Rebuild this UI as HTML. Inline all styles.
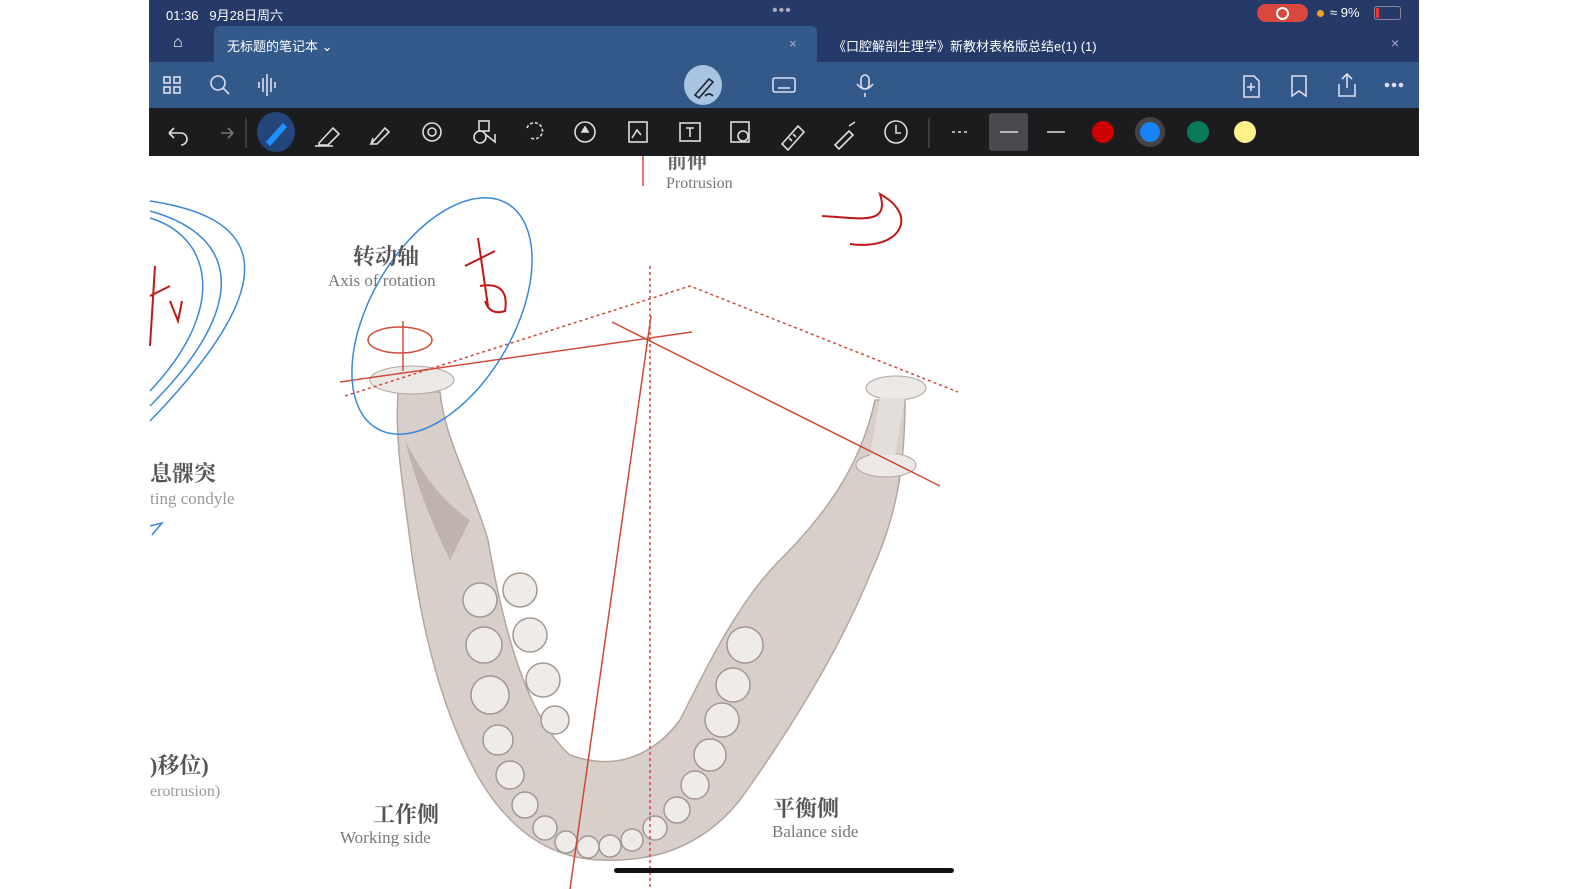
<!DOCTYPE html>
<html><head><meta charset="utf-8"><style>
body{margin:0;width:1580px;height:889px;background:#fff;position:relative;overflow:hidden;font-family:"Liberation Sans","Noto Sans CJK SC",sans-serif}
.a{position:absolute}
.w{color:#fff}
</style></head><body>
<div class="a" style="left:149px;top:0;width:1270px;height:62px;background:#263a6a"></div>
<div class="a w" style="left:166px;top:5px;font-size:13px">01:36&nbsp;&nbsp;&nbsp;9月28日周六</div>
<div class="a w" style="left:772px;top:2px;font-size:16px;letter-spacing:1px;color:#aab">•••</div>
<div class="a" style="left:1257px;top:4px;width:51px;height:18px;border-radius:9px;background:#d9473f"></div>
<div class="a" style="left:1276px;top:7px;width:9px;height:9px;border:2px solid #fff;border-radius:50%"></div>
<div class="a" style="left:1317px;top:10px;width:7px;height:7px;border-radius:50%;background:#f0a020"></div>
<div class="a w" style="left:1330px;top:5px;font-size:13px">≈ 9%</div>
<div class="a" style="left:1374px;top:6px;width:25px;height:12px;border:1px solid #889;border-radius:3px"><div style="width:3px;height:10px;margin:1px;background:#e33"></div></div>
<div class="a w" style="left:173px;top:34px;font-size:16px">⌂</div>
<div class="a" style="left:214px;top:26px;width:603px;height:36px;background:#345a8c;border-radius:6px 6px 0 0"></div>
<div class="a w" style="left:227px;top:36px;font-size:13px">无标题的笔记本 ⌄</div>
<div class="a" style="left:789px;top:36px;font-size:13px;color:#aac">×</div>
<div class="a w" style="left:833px;top:36px;font-size:13px">《口腔解剖生理学》新教材表格版总结e(1) (1)</div>
<div class="a" style="left:1391px;top:35px;font-size:14px;color:#aac">×</div>
<div class="a" style="left:149px;top:62px;width:1270px;height:46px;background:#33598b"></div>
<svg class="a" style="left:149px;top:62px" width="1270" height="46" fill="none" stroke="#dde" stroke-width="1.6">
<rect x="15" y="15" width="6" height="6"/><rect x="25" y="15" width="6" height="6"/><rect x="15" y="25" width="6" height="6"/><rect x="25" y="25" width="6" height="6"/>
<circle cx="69" cy="21" r="7"/><path d="M74 26l6 6"/>
<path d="M110 20v6M114 16v14M118 12v22M122 16v14M126 20v6"/>
<ellipse cx="554" cy="23" rx="19" ry="20" fill="#a9c4e0" stroke="none"/><path d="M546 33l14-16 4 3-14 16z" stroke="#223"/><path d="M556 34q4-4 8 0" stroke="#223"/>
<rect x="624" y="16" width="22" height="14" rx="2"/><path d="M629 26h12"/>
<rect x="712" y="13" width="8" height="14" rx="4"/><path d="M708 22q8 10 16 0M716 31v4"/>
<path d="M1095 14h10l5 5v16h-15z M1102 21v8M1098 25h8"/>
<path d="M1143 14h14v20l-7-5-7 5z"/>
<path d="M1190 22v12h16V22M1198 12v14M1193 17l5-5 5 5"/>
<circle cx="1238" cy="23" r="1.5" fill="#dde"/><circle cx="1245" cy="23" r="1.5" fill="#dde"/><circle cx="1252" cy="23" r="1.5" fill="#dde"/>
</svg>
<div class="a" style="left:149px;top:108px;width:1270px;height:48px;background:#1c1c1e"></div>
<svg class="a" style="left:149px;top:108px" width="1270" height="48" fill="none" stroke="#ddd" stroke-width="1.6">
<path d="M20 25h12a6 6 0 010 12M20 25l5-5M20 25l5 5"/>
<path d="M84 25h-12M84 25l-5-5M84 25l-5 5" stroke="#777"/>
<line x1="97" y1="10" x2="97" y2="40" stroke="#444"/>
<ellipse cx="127" cy="24" rx="19" ry="20" fill="#24457a" stroke="none"/><path d="M118 34l16-18 3 3-16 18z" fill="#1e90ff" stroke="#1e90ff"/>
<path d="M170 35l14-15 6 6-11 11h-9zM166 38h18"/>
<path d="M222 36l14-16 4 4-12 12zM222 36l2-6"/>
<circle cx="283" cy="24" r="9"/><circle cx="283" cy="24" r="4"/>
<rect x="330" y="13" width="10" height="10"/><circle cx="331" cy="29" r="6"/><path d="M336 26l10 8v-8"/>
<path d="M378 20a8 8 0 1 1 4 10" stroke-dasharray="3 2"/>
<circle cx="436" cy="24" r="10"/><path d="M433 24l3-5 3 5z" fill="#ddd"/>
<rect x="480" y="14" width="18" height="20"/><path d="M483 30l5-8 4 5"/>
<rect x="531" y="15" width="20" height="18"/><path d="M537 20h8M541 20v9"/>
<rect x="582" y="14" width="18" height="20"/><circle cx="594" cy="28" r="5"/>
<path d="M633 36l16-18 6 6-16 18zM640 30l3 3M644 26l3 3"/>
<path d="M686 37l14-14 4 4-14 14zM700 18l6-4"/>
<circle cx="747" cy="24" r="11"/><path d="M747 17v8h5"/>
<line x1="780" y1="10" x2="780" y2="40" stroke="#444"/>
<path d="M803 24h18" stroke-dasharray="3 3"/>
<rect x="840" y="5" width="39" height="38" rx="3" fill="#4a4a4e" stroke="none"/><path d="M851 24h18"/>
<path d="M898 24h18"/>
<circle cx="954" cy="24" r="11" fill="#d00000" stroke="none"/>
<circle cx="1001" cy="24" r="15" fill="#444" stroke="none"/><circle cx="1001" cy="24" r="10" fill="#1883f5" stroke="none"/>
<circle cx="1049" cy="24" r="11" fill="#0a7a5a" stroke="none"/>
<circle cx="1096" cy="24" r="11" fill="#fbf38a" stroke="none"/>
</svg>
<svg class="a" style="left:0;top:156px" width="1580" height="733">
<g transform="translate(0,-156)">
<path d="M398,392 L440,392 C445,440 470,480 488,540 C505,640 530,720 570,755 C610,770 650,760 680,720 C710,660 740,600 780,560 C820,520 860,470 875,400 L905,400 C905,470 895,520 872,570 C840,650 790,730 740,800 C700,850 650,862 600,860 C550,858 510,830 480,780 C440,710 420,620 410,540 C402,480 395,440 398,392 Z" fill="#d8ceca" stroke="#b4a6a0" stroke-width="1.5"/>
<path d="M405,440 C420,470 440,500 470,520 L450,560 C430,520 415,480 405,440Z" fill="#c0b2ac"/>
<g fill="#efebe9" stroke="#a39792" stroke-width="1.5">
<circle cx="480" cy="600" r="17"/><circle cx="484" cy="645" r="18"/><circle cx="490" cy="695" r="19"/><circle cx="498" cy="740" r="15"/><circle cx="510" cy="775" r="14"/><circle cx="525" cy="805" r="13"/><circle cx="545" cy="828" r="12"/><circle cx="566" cy="842" r="11"/><circle cx="588" cy="847" r="11"/><circle cx="610" cy="846" r="11"/><circle cx="632" cy="840" r="11"/><circle cx="655" cy="828" r="12"/><circle cx="677" cy="810" r="13"/><circle cx="695" cy="785" r="14"/><circle cx="710" cy="755" r="16"/><circle cx="722" cy="720" r="17"/><circle cx="733" cy="685" r="17"/><circle cx="745" cy="645" r="18"/>
<circle cx="520" cy="590" r="17"/><circle cx="530" cy="635" r="17"/><circle cx="543" cy="680" r="17"/><circle cx="555" cy="720" r="14"/>
</g>
<ellipse cx="412" cy="380" rx="42" ry="14" fill="#ece8e6" stroke="#b4a6a0"/>
<ellipse cx="896" cy="388" rx="30" ry="12" fill="#ece8e6" stroke="#b4a6a0"/>
<ellipse cx="886" cy="465" rx="30" ry="12" fill="#ece8e6" stroke="#b4a6a0"/>
<path d="M880,398 L870,455 L895,455 L905,398Z" fill="#e4dedb"/>
</g>
<g stroke="#d04a3a" stroke-width="1.5" fill="none">
<path d="M340 226 L692 176"/><path d="M612 166 L940 330"/><path d="M651 160 L570 733"/>
<path d="M650 110 V733" stroke-dasharray="3 3"/><path d="M345 240 L690 130 L958 236" stroke-dasharray="3 3"/>
<path d="M643 0 V30"/><ellipse cx="400" cy="184" rx="32" ry="13"/><path d="M403 165 V215"/>
</g>
<g stroke="#3a88d8" stroke-width="1.5" fill="none">
<path d="M150 45 C250 60 300 110 150 265"/><path d="M150 55 C240 80 250 150 150 250"/><path d="M150 62 C210 80 230 150 150 235"/>
<ellipse cx="442" cy="160" rx="72" ry="130" transform="rotate(30 442 160)"/>
<path d="M150 370 l12-3-10 12"/>
</g>
<g stroke="#c01818" stroke-width="2" fill="none">
<path d="M822 60 C860 62 890 70 880 38 C920 60 900 95 850 88"/>
<path d="M478 82 L488 150 M465 110 L495 95 M480 130 Q510 125 505 155 Q490 160 485 145"/>
<path d="M155 110 L150 190 M150 140 L170 130 M170 145 l8 20 4-20"/>
</g>
<g font-family="'Liberation Serif','Noto Serif CJK SC',serif" fill="#777">
<text x="667" y="12" font-size="20" fill="#666" font-weight="bold">前伸</text>
<text x="666" y="32" font-size="16">Protrusion</text>
<text x="353" y="108" font-size="22" fill="#555" font-weight="bold">转动轴</text>
<text x="328" y="130" font-size="17">Axis of rotation</text>
<text x="150" y="325" font-size="22" fill="#555" font-weight="bold">息髁突</text>
<text x="150" y="348" font-size="17" fill="#999">ting  condyle</text>
<text x="150" y="617" font-size="22" fill="#555" font-weight="bold">)移位)</text>
<text x="150" y="640" font-size="16" fill="#999">erotrusion)</text>
<text x="373" y="666" font-size="22" fill="#555" font-weight="bold">工作侧</text>
<text x="340" y="687" font-size="17">Working side</text>
<text x="773" y="660" font-size="22" fill="#555" font-weight="bold">平衡侧</text>
<text x="772" y="681" font-size="17">Balance side</text>
</g>
<rect x="614" y="712" width="340" height="5" rx="2.5" fill="#111"/>
</svg>
</body></html>
